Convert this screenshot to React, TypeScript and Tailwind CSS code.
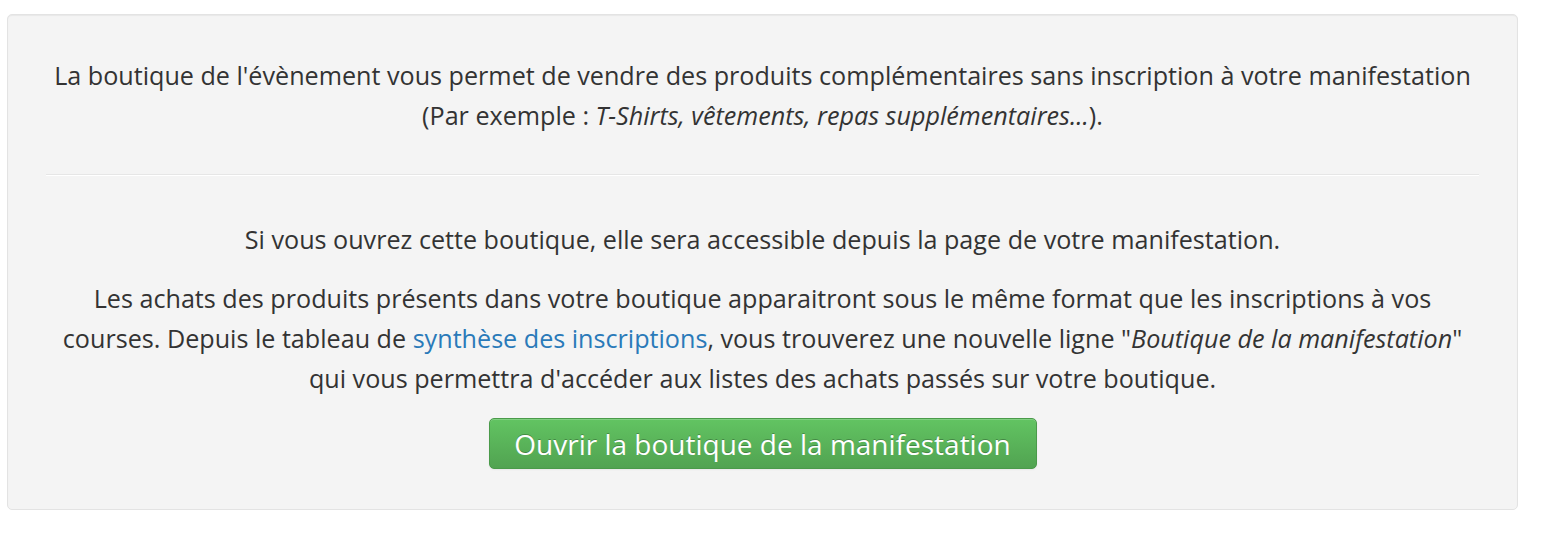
export default function App() {
  return (
    <div className="w-[1546px] h-[534px] bg-white pt-[14px] pl-[7px]" style={{ fontFamily: '"Open Sans", sans-serif' }}>
      <div className="w-[1511px] h-[496px] bg-[#f4f4f4] border border-[#e3e3e3] rounded-[5px] shadow-[inset_0_1px_1px_rgba(0,0,0,0.05)] px-[38px] pt-[40px] text-[#333] text-[25.15px] leading-[40px] text-center">
        <p>
          La boutique de l'évènement vous permet de vendre des produits complémentaires sans inscription à votre manifestation
          <br />
          (Par exemple : <em>T-Shirts, vêtements, repas supplémentaires...</em>).
        </p>
        <div className="mt-[39px] border-t border-[#e6e6e6] border-b border-b-white" />
        <p className="mt-[43px]">Si vous ouvrez cette boutique, elle sera accessible depuis la page de votre manifestation.</p>
        <p className="mt-[19px] px-[2px]">
          Les achats des produits présents dans votre boutique apparaitront sous le même format que les inscriptions à vos courses. Depuis le tableau de{' '}
          <a className="text-[#2a7ab9]">synthèse des inscriptions</a>, vous trouverez une nouvelle ligne "<em>Boutique de la manifestation</em>" qui vous permettra d'accéder aux listes des achats passés sur votre boutique.
        </p>
        <div className="mt-[20px] flex justify-center">
          <button className="h-[51px] w-[548px] rounded-[5px] border border-[#4a9a4a] bg-gradient-to-b from-[#62c462] to-[#51a351] text-white text-[28px] leading-[30px] [text-shadow:0_-1px_0_rgba(0,0,0,0.25)] shadow-[inset_0_1px_0_rgba(255,255,255,0.2),0_1px_2px_rgba(0,0,0,0.05)]">
            Ouvrir la boutique de la manifestation
          </button>
        </div>
      </div>
    </div>
  );
}
